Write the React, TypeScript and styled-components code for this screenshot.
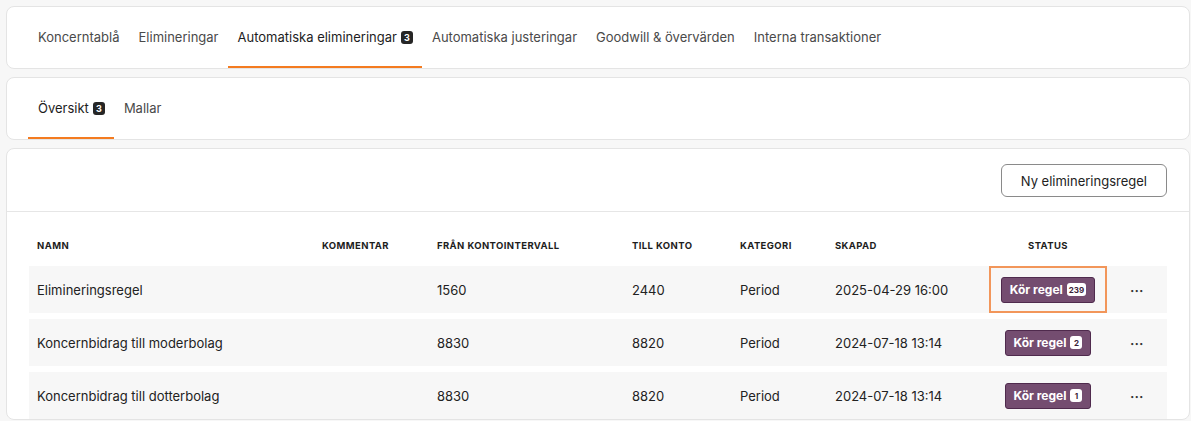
import styled, { createGlobalStyle } from 'styled-components';

const GlobalStyle = createGlobalStyle`
  html, body {
    margin: 0;
    background: #f7f7f7;
    font-family: Inter, "Liberation Sans", sans-serif;
    color: #222;
    overflow: hidden;
  }
  * { box-sizing: border-box; }
`;

interface Rule {
    name: string;
    comment: string;
    from: string;
    to: string;
    category: string;
    created: string;
    count: number;
    highlighted?: boolean;
}

const rules: Rule[] = [
    { name: 'Elimineringsregel', comment: '', from: '1560', to: '2440', category: 'Period', created: '2025-04-29 16:00', count: 239, highlighted: true },
    { name: 'Koncernbidrag till moderbolag', comment: '', from: '8830', to: '8820', category: 'Period', created: '2024-07-18 13:14', count: 2 },
    { name: 'Koncernbidrag till dotterbolag', comment: '', from: '8830', to: '8820', category: 'Period', created: '2024-07-18 13:14', count: 1 },
];

const mainTabs = [
    { label: 'Koncerntablå' },
    { label: 'Elimineringar' },
    { label: 'Automatiska elimineringar', badge: 3, active: true },
    { label: 'Automatiska justeringar' },
    { label: 'Goodwill & övervärden' },
    { label: 'Interna transaktioner' },
];

const subTabs = [
    { label: 'Översikt', badge: 3, active: true },
    { label: 'Mallar' },
];

const App = () => {
    return (
        <Page>
            <GlobalStyle />
            <Card>
                <TabBar>
                    {mainTabs.map(t => (
                        <Tab key={t.label} $active={!!t.active}>
                            {t.label}
                            {t.badge !== undefined && <CountBadge>{t.badge}</CountBadge>}
                        </Tab>
                    ))}
                </TabBar>
            </Card>

            <Card>
                <TabBar>
                    {subTabs.map(t => (
                        <Tab key={t.label} $active={!!t.active}>
                            {t.label}
                            {t.badge !== undefined && <CountBadge>{t.badge}</CountBadge>}
                        </Tab>
                    ))}
                </TabBar>
            </Card>

            <Card>
                <Toolbar>
                    <OutlineButton>Ny elimineringsregel</OutlineButton>
                </Toolbar>
                <TableWrap>
                    <HeaderRow>
                        <HeadCell>Namn</HeadCell>
                        <HeadCell>Kommentar</HeadCell>
                        <HeadCell>Från kontointervall</HeadCell>
                        <HeadCell>Till konto</HeadCell>
                        <HeadCell>Kategori</HeadCell>
                        <HeadCell>Skapad</HeadCell>
                        <HeadCell $center>Status</HeadCell>
                        <HeadCell />
                    </HeaderRow>
                    {rules.map(r => (
                        <Row key={r.name}>
                            <Cell>{r.name}</Cell>
                            <Cell>{r.comment}</Cell>
                            <Cell>{r.from}</Cell>
                            <Cell>{r.to}</Cell>
                            <Cell>{r.category}</Cell>
                            <Cell>{r.created}</Cell>
                            <StatusCell>
                                <Highlight $on={!!r.highlighted}>
                                    <RunButton>
                                        Kör regel
                                        <RunBadge>{r.count}</RunBadge>
                                    </RunButton>
                                </Highlight>
                            </StatusCell>
                            <ActionCell>
                                <Dots>···</Dots>
                            </ActionCell>
                        </Row>
                    ))}
                </TableWrap>
            </Card>
        </Page>
    );
};

const Page = styled.div`
  display: flex;
  flex-direction: column;
  gap: 8px;
  padding: 6px 1px 0 6px;
`;

const Card = styled.div`
  background: #fff;
  border: 1px solid #e4e4e4;
  border-radius: 8px;
`;

const TabBar = styled.div`
  display: flex;
  align-items: stretch;
  height: 61px;
  padding: 0 21px;
`;

const Tab = styled.div<{ $active: boolean }>`
  display: flex;
  align-items: center;
  gap: 4px;
  padding: 0 9px 0 10px;
  font-size: 13px;
  color: ${props => props.$active ? '#1d1d1d' : '#4a4a4a'};
  border-bottom: 2px solid ${props => props.$active ? '#f47b20' : 'transparent'};
  padding-top: 1px;
  white-space: nowrap;
`;

const CountBadge = styled.span`
  display: inline-flex;
  align-items: center;
  justify-content: center;
  width: 12px;
  height: 13px;
  border-radius: 3px;
  background: #262626;
  color: #fff;
  font-size: 9px;
  font-weight: 700;
`;

const Toolbar = styled.div`
  display: flex;
  justify-content: flex-end;
  padding: 15px 22px 14px;
  border-bottom: 1px solid #e6e6e6;
`;

const OutlineButton = styled.button`
  height: 33px;
  padding: 0 19px;
  border: 1px solid #8a8a8a;
  border-radius: 6px;
  background: #fff;
  font-family: inherit;
  font-size: 13px;
  color: #222;
`;

const TableWrap = styled.div`
  display: flex;
  flex-direction: column;
  gap: 6px;
  padding: 20px 22px 0;
`;

const columns = '285px 115px 195px 108px 95px 148px 146px 1fr';

const HeaderRow = styled.div`
  display: grid;
  grid-template-columns: ${columns};
  height: 26px;
  align-items: center;
  margin-bottom: 2px;
`;

const HeadCell = styled.div<{ $center?: boolean }>`
  padding-left: ${props => props.$center ? '0' : '8px'};
  text-align: ${props => props.$center ? 'center' : 'left'};
  font-size: 9.5px;
  font-weight: 700;
  letter-spacing: 0.4px;
  text-transform: uppercase;
  color: #1d1d1d;
`;

const Row = styled.div`
  display: grid;
  grid-template-columns: ${columns};
  height: 47px;
  align-items: center;
  background: #f7f7f7;
`;

const Cell = styled.div`
  padding-left: 8px;
  font-size: 13px;
  color: #222;
  white-space: nowrap;
`;

const StatusCell = styled.div`
  display: flex;
  justify-content: center;
  align-items: center;
  height: 100%;
`;

const Highlight = styled.div<{ $on: boolean }>`
  display: flex;
  align-items: center;
  justify-content: center;
  height: 100%;
  padding: 0 ${props => props.$on ? '10px' : '0'};
  border: ${props => props.$on ? '2px solid #f2965a' : 'none'};
`;

const RunButton = styled.button`
  display: inline-flex;
  align-items: center;
  gap: 4px;
  height: 26px;
  padding: 0 8px;
  border: 1px solid #4f2a4d;
  border-radius: 3px;
  background: #744d70;
  color: #fff;
  font-family: inherit;
  font-size: 12px;
  font-weight: 700;
`;

const RunBadge = styled.span`
  display: inline-flex;
  align-items: center;
  justify-content: center;
  min-width: 12px;
  height: 13px;
  padding: 0 2px;
  border-radius: 3px;
  background: #fff;
  color: #3a2238;
  font-size: 8px;
  font-weight: 700;
`;

const ActionCell = styled.div`
  padding-left: 9px;
`;

const Dots = styled.span`
  font-size: 14px;
  font-weight: 600;
  color: #333;
  letter-spacing: 0px;
`;

export default App;
